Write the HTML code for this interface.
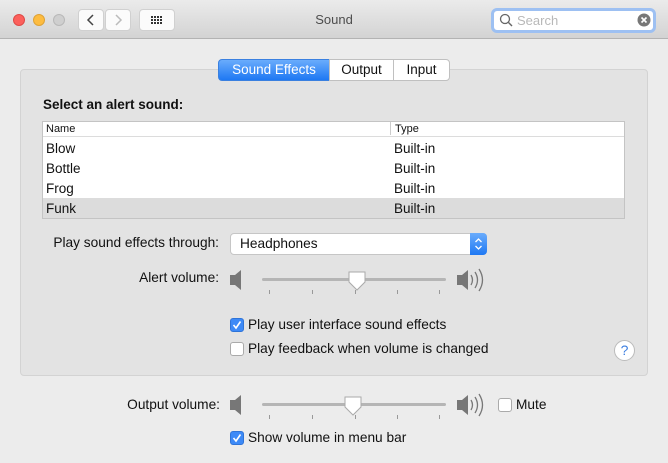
<!DOCTYPE html>
<html><head><style>
*{box-sizing:border-box;margin:0;padding:0}
body{width:668px;height:463px;background:#ececec;font-family:"Liberation Sans",sans-serif;font-size:13.7px;color:#111;position:relative;overflow:hidden}
.a{position:absolute}
.tb{left:0;top:0;width:668px;height:39px;background:linear-gradient(#ebebeb,#d3d3d3);border-bottom:1px solid #b3b3b3}
.dot{width:12px;height:12px;border-radius:50%;top:14px}
.btn{background:#fbfbfb;border:1px solid #d0d0d0;border-radius:4px;height:22px;top:9px}
.panel{left:20px;top:69px;width:628px;height:307px;background:#e3e3e3;border:1px solid #d3d3d3;border-radius:4px}
.tab{top:59px;height:22px;background:#fff;border:1px solid #c0c0c0;line-height:20px;text-align:center;font-size:13.5px}
.cb{width:14px;height:14px;border:1px solid #aaa;border-radius:3px;background:#fff}
.cb.on{background:#3d8af7;border-color:#2f74d8}
.row{left:43px;width:581px;height:20px;line-height:21px;font-size:13.5px}
.row span{position:absolute;left:3px}.row b{font-weight:normal;position:absolute;left:351px}
.r{text-align:right;width:200px}
</style></head><body>
<div class="a tb"></div>
<div class="a dot" style="left:13px;background:#fc605c;border:1px solid #de4a46"></div>
<div class="a dot" style="left:33px;background:#fdbc40;border:1px solid #dea236"></div>
<div class="a dot" style="left:53px;background:#cfcfcf;border:1px solid #b8b8b8"></div>
<div class="a btn" style="left:78px;width:26px"><svg width="26" height="22" class="a" style="left:-1px;top:-1px"><path d="M15 6l-5 5 5 5" stroke="#444" stroke-width="1.5" fill="none"/></svg></div>
<div class="a btn" style="left:105px;width:26px"><svg width="26" height="22" class="a" style="left:-1px;top:-1px"><path d="M11 6l5 5-5 5" stroke="#bbb" stroke-width="1.5" fill="none"/></svg></div>
<div class="a btn" style="left:139px;width:36px"><svg width="36" height="22" class="a" style="left:-1px;top:-1px"><g fill="#333"><rect x="12" y="7" width="2" height="2"/><rect x="15" y="7" width="2" height="2"/><rect x="18" y="7" width="2" height="2"/><rect x="21" y="7" width="2" height="2"/><rect x="12" y="10" width="2" height="2"/><rect x="15" y="10" width="2" height="2"/><rect x="18" y="10" width="2" height="2"/><rect x="21" y="10" width="2" height="2"/><rect x="12" y="13" width="2" height="2"/><rect x="15" y="13" width="2" height="2"/><rect x="18" y="13" width="2" height="2"/><rect x="21" y="13" width="2" height="2"/></g></svg></div>
<div class="a" style="left:0;width:668px;top:12px;text-align:center;color:#4d4d4d;font-size:13px">Sound</div>
<div class="a" style="left:491px;top:8px;width:165px;height:25px;border:3px solid #9dc0f2;border-radius:6px;background:#fff"></div>
<svg class="a" style="left:499px;top:13px" width="14" height="14"><circle cx="6" cy="6" r="4.5" stroke="#666" stroke-width="1.3" fill="none"/><path d="M9.5 9.5l3.5 3.5" stroke="#666" stroke-width="1.4"/></svg>
<div class="a" style="left:517px;top:13px;color:#b8b8b8;font-size:13px">Search</div>
<svg class="a" style="left:637px;top:13px" width="14" height="14"><circle cx="7" cy="7" r="6.5" fill="#777"/><path d="M4.5 4.5l5 5M9.5 4.5l-5 5" stroke="#fff" stroke-width="1.6"/></svg>

<div class="a panel"></div>
<div class="a tab" style="left:218px;width:112px;background:linear-gradient(#6aacfc,#1e78f3);color:#fff;border-color:#3a80e0;border-radius:4px 0 0 4px">Sound Effects</div>
<div class="a tab" style="left:329px;width:65px">Output</div>
<div class="a tab" style="left:393px;width:57px;border-radius:0 4px 4px 0">Input</div>

<div class="a" style="left:43px;top:97px;font-weight:bold;font-size:13.5px">Select an alert sound:</div>
<div class="a" style="left:42px;top:121px;width:583px;height:98px;background:#fff;border:1px solid #c4c4c4"></div>
<div class="a" style="left:43px;top:122px;width:581px;height:15px;border-bottom:1px solid #dcdcdc;font-size:11px;line-height:14px"><span class="a" style="left:3px">Name</span><span class="a" style="left:347px;border-left:1px solid #ccc;padding-left:4px;height:13px">Type</span></div>
<div class="a row" style="top:138px"><span>Blow</span><b>Built-in</b></div>
<div class="a row" style="top:158px"><span>Bottle</span><b>Built-in</b></div>
<div class="a row" style="top:178px"><span>Frog</span><b>Built-in</b></div>
<div class="a row" style="top:198px;background:#dcdcdc"><span>Funk</span><b>Built-in</b></div>

<div class="a r" style="left:19px;top:235px">Play sound effects through:</div>
<div class="a" style="left:230px;top:233px;width:257px;height:22px;background:#fff;border:1px solid #c6c6c6;border-radius:4px;padding:2px 0 0 9px">Headphones</div>
<div class="a" style="left:470px;top:233px;width:17px;height:22px;background:linear-gradient(#6aacfc,#1e78f3);border-radius:0 4px 4px 0"><svg width="17" height="22"><path d="M5.5 9l3-3 3 3M5.5 13l3 3 3-3" stroke="#fff" stroke-width="1.3" fill="none"/></svg></div>

<div class="a r" style="left:19px;top:270px">Alert volume:</div>
<div class="a r" style="left:20px;top:397px">Output volume:</div>

<svg class="a" style="left:228px;top:268px" width="262" height="30">
<path d="M2 7h5l6-5v20l-6-5H2z" fill="#777"/>
<rect x="34" y="10" width="184" height="3" rx="1.5" fill="#b5b5b5"/>
<g fill="#999"><rect x="41" y="22" width="1" height="4"/><rect x="84" y="22" width="1" height="4"/><rect x="127" y="22" width="1" height="4"/><rect x="169" y="22" width="1" height="4"/><rect x="211" y="22" width="1" height="4"/></g>
<path d="M121 4h16v10l-8 8-8-8z" fill="#fff" stroke="#aaa"/>
<path d="M229 7h5l6-5v20l-6-5h-5z" fill="#777"/>
<path d="M243 7q3 5 0 10M247 4q5 8 0 16M251 1q7 11 0 22" stroke="#777" stroke-width="1.3" fill="none"/>
</svg>
<svg class="a" style="left:228px;top:393px" width="262" height="30">
<path d="M2 7h5l6-5v20l-6-5H2z" fill="#777"/>
<rect x="34" y="10" width="184" height="3" rx="1.5" fill="#b5b5b5"/>
<g fill="#999"><rect x="41" y="22" width="1" height="4"/><rect x="84" y="22" width="1" height="4"/><rect x="127" y="22" width="1" height="4"/><rect x="169" y="22" width="1" height="4"/><rect x="211" y="22" width="1" height="4"/></g>
<path d="M117 4h16v10l-8 8-8-8z" fill="#fff" stroke="#aaa"/>
<path d="M229 7h5l6-5v20l-6-5h-5z" fill="#777"/>
<path d="M243 7q3 5 0 10M247 4q5 8 0 16M251 1q7 11 0 22" stroke="#777" stroke-width="1.3" fill="none"/>
</svg>

<div class="a cb on" style="left:230px;top:318px"><svg width="12" height="12" class="a"><path d="M2.5 6l2.5 3 4.5-6.5" stroke="#fff" stroke-width="1.6" fill="none"/></svg></div>
<div class="a" style="left:248px;top:317px">Play user interface sound effects</div>
<div class="a cb" style="left:230px;top:342px"></div>
<div class="a" style="left:248px;top:341px">Play feedback when volume is changed</div>
<div class="a" style="left:614px;top:340px;width:21px;height:21px;border-radius:50%;background:#fff;border:1px solid #bbb;color:#3d7fe0;text-align:center;line-height:19px;font-size:14px">?</div>

<div class="a cb" style="left:498px;top:398px"></div>
<div class="a" style="left:516px;top:397px">Mute</div>
<div class="a cb on" style="left:230px;top:431px"><svg width="12" height="12" class="a"><path d="M2.5 6l2.5 3 4.5-6.5" stroke="#fff" stroke-width="1.6" fill="none"/></svg></div>
<div class="a" style="left:248px;top:430px">Show volume in menu bar</div>
</body></html>
